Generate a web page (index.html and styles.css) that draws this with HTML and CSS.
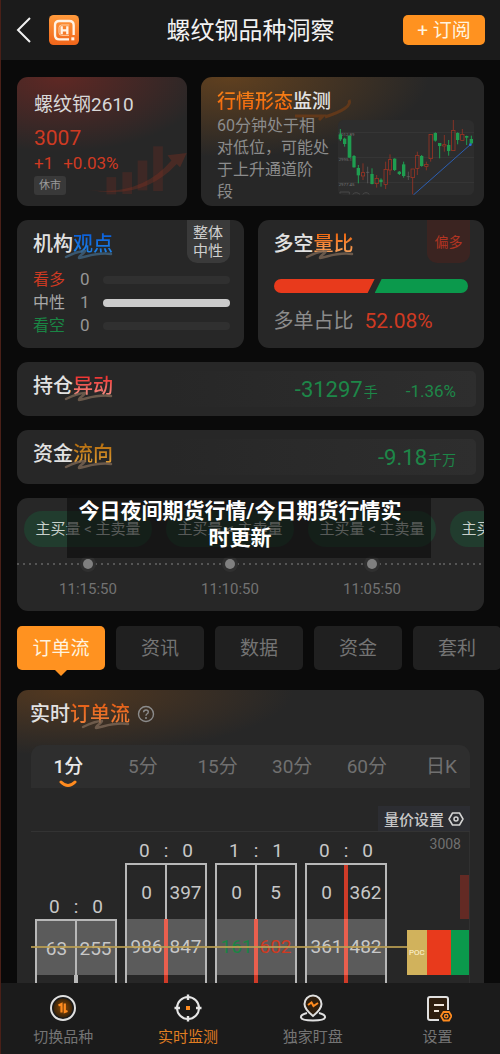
FILE: index.html
```html
<!DOCTYPE html>
<html lang="zh-CN">
<head>
<meta charset="utf-8">
<meta name="viewport" content="width=device-width, initial-scale=1">
<title>螺纹钢品种洞察</title>
<link rel="stylesheet" href="styles.css">
</head>
<body>
<svg class="defs" aria-hidden="true">
  <symbol id="swash" viewBox="0 0 50 12"><path d="M2 8C10 4 17 2 21 2C21 4 14 7 15 9C22 8 33 3 47 5" fill="none" stroke="currentColor" stroke-width="2.500" stroke-linecap="round" stroke-linejoin="round"/></symbol>
</svg>
<header class="topbar">
  <div class="topbar-left">
    <button class="back" aria-label="返回"><svg viewBox="0 0 16 28" width="16" height="28"><path d="M14 2L2 14L14 26" fill="none" stroke="#f0f0f0" stroke-width="2"/></svg></button>
    <svg class="logo" viewBox="0 0 90 90" width="30" height="30" aria-hidden="true">
      <defs><linearGradient id="lg" x2="0" y2="1"><stop stop-color="#ff9a3c"/><stop offset="1" stop-color="#f0651a"/></linearGradient></defs>
      <rect width="90" height="90" rx="14" fill="url(#lg)"/>
      <path d="M60 73H31Q18 73 18 60V31Q18 18 31 18H61Q74 18 74 31V60" fill="none" stroke="#fff3e6" stroke-width="7"/>
      <path d="M60 61H38Q30 61 30 53V38Q30 30 38 30H61" fill="none" stroke="#ffd0a5" stroke-width="3"/>
      <path d="M38 34V58M55 34V58M38 46H55" fill="none" stroke="#fff3e6" stroke-width="7"/>
      <rect x="67" y="67" width="9" height="9" fill="#fff3e6"/>
    </svg>
  </div>
  <h1 class="topbar-title">螺纹钢品种洞察</h1>
  <button class="subscribe">+ 订阅</button>
</header>

<main class="content">
  <div class="row row-quote">
    <section class="card quote">
      <h2 class="quote-name">螺纹钢2610</h2>
      <div class="quote-price">3007</div>
      <div class="quote-change"><span>+1</span><span>+0.03%</span></div>
      <span class="tag">休市</span>
      <svg class="quote-art" viewBox="260 430 300 160" width="100" height="53" aria-hidden="true">
        <g fill="#7a2d22" opacity=".28"><rect x="318" y="530" width="29" height="52"/><rect x="366" y="515" width="29" height="66"/><rect x="412" y="480" width="29" height="90"/><rect x="459" y="437" width="29" height="135"/></g>
        <path d="M262 568Q420 590 514 480L502 464L560 457L540 500L530 490Q430 600 262 568Z" fill="#8a3020" opacity=".35"/>
      </svg>
    </section>
    <section class="card pattern">
      <svg class="pattern-swash" viewBox="0 0 60 24" width="60" height="24" aria-hidden="true"><path d="M2 18L30 18L26 22M32 19Q60 10 56 2" fill="none" stroke="#8a4210" stroke-width="3" opacity=".5"/></svg>
      <h2 class="title title-sm"><span class="hl-deep">行情形态</span>监测</h2>
      <div class="pattern-body">
        <p class="pattern-text">60分钟处于相<br>对低位，可能处<br>于上升通道阶<br>段</p>
        <svg class="mini" viewBox="24 15 408 225" width="136" height="75" role="img" aria-label="走势图">
          <rect x="24" y="15" width="408" height="225" rx="16" fill="#2d2d2d"/>
          <path d="M24 52H432M24 127H432M24 202H432" stroke="#3d3d3d" stroke-width="2"/>
          <g class="mini-label"><text x="26" y="62">3012.89</text><text x="26" y="137">2995.1</text><text x="26" y="212">2977.45</text></g>
          <path d="M30 236V231H58V238M68 238Q78 228 90 238M98 238Q108 228 118 238" fill="none" stroke="#484848" stroke-width="3"/>
          <path d="M31 42V78M44 68V95M58 62V128M72 120V158M85 150V205M126 160V208M153 190V215M194 130V168M208 168V180M221 140V188M275 120V155M316 52V80M329 84V130M356 75V122M383 52V88M410 62V90M424 62V88" stroke="#1f9d50" stroke-width="3"/>
          <g fill="#1f9d50"><rect x="26" y="58" width="10" height="15"/><rect x="39" y="71" width="10" height="16"/><rect x="53" y="62" width="11" height="66"/><rect x="67" y="123" width="10" height="34"/><rect x="80" y="159" width="10" height="22"/><rect x="121" y="177" width="10" height="30"/><rect x="148" y="194" width="10" height="7"/><rect x="189" y="131" width="10" height="34"/><rect x="203" y="170" width="10" height="7"/><rect x="216" y="148" width="10" height="35"/><rect x="270" y="123" width="10" height="30"/><rect x="311" y="54" width="10" height="23"/><rect x="324" y="84" width="10" height="9"/><rect x="351" y="90" width="10" height="18"/><rect x="378" y="54" width="10" height="21"/><rect x="405" y="63" width="10" height="5"/><rect x="419" y="72" width="10" height="13"/></g>
          <path d="M99 145V172M99 184V195M140 180V190M140 206V218M167 140V163M167 208V222M180 118V134M180 165V180M248 188V238M262 110V120M262 160V180M289 140V148M289 155V166M302 132V140M343 60V88M343 94V110M370 15V45M397 42V58" stroke="#b03522" stroke-width="2"/>
          <g fill="none" stroke="#b03522" stroke-width="2"><rect x="94" y="173" width="10" height="10"/><rect x="135" y="190" width="10" height="16"/><rect x="162" y="163" width="10" height="45"/><rect x="175" y="134" width="10" height="31"/><rect x="243" y="162" width="10" height="26"/><rect x="257" y="121" width="10" height="39"/><rect x="284" y="148" width="10" height="6"/><rect x="297" y="58" width="10" height="73"/><rect x="338" y="89" width="10" height="4"/><rect x="365" y="46" width="10" height="61"/><rect x="392" y="58" width="10" height="18"/></g>
          <path d="M113 155V205M108 172H118M235 170V195M230 185H240" stroke="#666" stroke-width="2"/>
          <path d="M250 240L422 88" stroke="#2c5fb3" stroke-width="3"/><circle cx="421" cy="89" r="4" fill="#2c6fe0"/>
        </svg>
      </div>
    </section>
  </div>

  <div class="row row-view">
    <section class="card view">
      <h2 class="title">机构<span class="hl-blue">观点</span><svg class="swash swash-blue"><use href="#swash"/></svg></h2>
      <span class="corner">整体<br>中性</span>
      <ul class="votes">
        <li class="vote"><span class="up">看多</span><b>0</b><i class="track"></i></li>
        <li class="vote"><span>中性</span><b>1</b><i class="track track-full"></i></li>
        <li class="vote"><span class="down">看空</span><b>0</b><i class="track"></i></li>
      </ul>
    </section>
    <section class="card ratio">
      <h2 class="title">多空<span class="hl-orange">量比</span><svg class="swash"><use href="#swash"/></svg></h2>
      <span class="corner corner-red">偏多</span>
      <div class="ratio-bar"><i class="ratio-long"></i><i class="ratio-short"></i></div>
      <div class="ratio-text"><span>多单占比</span><b>52.08%</b></div>
    </section>
  </div>

  <section class="card strip">
    <h2 class="title">持仓<span class="hl-red">异动</span><svg class="swash"><use href="#swash"/></svg></h2>
    <div class="strip-values"><span class="big">-31297<small>手</small></span><span class="pct">-1.36%</span></div>
  </section>
  <section class="card strip">
    <h2 class="title">资金<span class="hl-gold">流向</span><svg class="swash"><use href="#swash"/></svg></h2>
    <div class="strip-values"><span class="big">-9.18<small>千万</small></span></div>
  </section>

  <div class="timeline-wrap">
    <section class="card timeline">
      <ol class="events">
        <li class="event"><span class="pill">主买量 &lt; 主卖量</span><i class="dot"></i><time>11:15:50</time></li>
        <li class="event"><span class="pill">主买量 &lt; 主卖量</span><i class="dot"></i><time>11:10:50</time></li>
        <li class="event"><span class="pill">主买量 &lt; 主卖量</span><i class="dot"></i><time>11:05:50</time></li>
        <li class="event"><span class="pill">主买量 &lt; 主卖量</span></li>
      </ol>
    </section>
    <div class="caption">今日夜间期货行情/今日期货行情实时更新</div>
  </div>

  <nav class="tabs" aria-label="数据分类">
    <button class="tab tab-active">订单流</button><button class="tab">资讯</button><button class="tab">数据</button><button class="tab">资金</button><button class="tab">套利</button>
  </nav>

  <section class="card flow">
    <div class="flow-head">
      <h2 class="title">实时<span class="hl-flow">订单流</span><svg class="swash"><use href="#swash"/></svg></h2>
      <svg viewBox="0 0 18 18" width="18" height="18" aria-hidden="true"><circle cx="9" cy="9" r="7.500" fill="none" stroke="#8c8c8c" stroke-width="1.400"/><path d="M6.600 7.200Q6.700 5 9 5Q11.300 5 11.300 7Q11.300 8.200 9.900 9Q9 9.600 9 10.700" fill="none" stroke="#8c8c8c" stroke-width="1.400"/><circle cx="9" cy="13" r="1" fill="#8c8c8c"/></svg>
    </div>
    <div class="periods">
      <button class="period period-active">1分<svg viewBox="0 0 18 8" width="18" height="8" aria-hidden="true"><path d="M2 2Q9 9 16 2" fill="none" stroke="#ff8b1f" stroke-width="3" stroke-linecap="round"/></svg></button><button class="period">5分</button><button class="period">15分</button><button class="period">30分</button><button class="period">60分</button><button class="period">日K</button>
    </div>
    <button class="settings">量价设置<svg viewBox="0 0 16 16" width="16" height="16" aria-hidden="true"><path d="M4.500 2H11.500L15 8L11.500 14H4.500L1 8Z" fill="none" stroke="#d5d5d5" stroke-width="1.500" stroke-linejoin="round"/><circle cx="8" cy="8" r="2" fill="none" stroke="#d5d5d5" stroke-width="1.500"/></svg></button>
    <div class="chart">
      <div class="prints">
        <div class="print">
          <div class="print-head"><span>0</span><span>:</span><span>0</span></div>
          <div class="cells cells-poc cells-first"><span>63</span><span>255</span></div>
          <div class="cells cells-cut cells-white"></div>
        </div>
        <div class="print">
          <div class="print-head"><span>0</span><span>:</span><span>0</span></div>
          <div class="cells cells-first"><span>0</span><span>397</span></div>
          <div class="cells cells-poc cells-red"><span>986</span><span>847</span></div>
          <div class="cells cells-cut cells-red"></div>
        </div>
        <div class="print">
          <div class="print-head"><span>1</span><span>:</span><span>1</span></div>
          <div class="cells cells-first"><span>0</span><span>5</span></div>
          <div class="cells cells-poc cells-red"><span class="down">161</span><span class="up">602</span></div>
          <div class="cells cells-cut cells-red"></div>
        </div>
        <div class="print">
          <div class="print-head"><span>0</span><span>:</span><span>0</span></div>
          <div class="cells cells-first cells-red"><span>0</span><span>362</span></div>
          <div class="cells cells-poc cells-red"><span>361</span><span>482</span></div>
          <div class="cells cells-cut cells-red"></div>
        </div>
      </div>
      <div class="axis">
        <span class="axis-price">3008</span>
        <i class="axis-bar"></i>
        <div class="poc"><span>POC</span><i class="poc-red"></i><i class="poc-green"></i></div>
      </div>
      <i class="poc-line"></i>
    </div>
  </section>
</main>

<nav class="bottom" aria-label="主导航">
  <a class="nav-item" href="#switch">
    <svg viewBox="0 0 28 28" width="28" height="28" aria-hidden="true"><defs><radialGradient id="glow"><stop stop-color="#8a4a08"/><stop offset="1" stop-color="#3a2308"/></radialGradient></defs><circle cx="14" cy="14" r="9.500" fill="url(#glow)"/><circle cx="14" cy="14" r="12" fill="none" stroke="#e0e0e0" stroke-width="2"/><path d="M9.500 11.500L12.500 10V18.500M18.500 17L15.800 18V9.500" fill="none" stroke="#ff8b1f" stroke-width="2.200"/></svg>
    <span>切换品种</span></a>
  <a class="nav-item nav-active" href="#monitor" aria-current="page">
    <svg viewBox="0 0 28 28" width="28" height="28" aria-hidden="true"><circle cx="14" cy="14" r="11" fill="none" stroke="#e6e6e6" stroke-width="2"/><path d="M14 .5V6M14 22V27.500M.5 14H6M22 14H27.500" stroke="#e6e6e6" stroke-width="2.400"/><rect x="12" y="12" width="4" height="4" fill="#ff8b1f"/></svg>
    <span>实时监测</span></a>
  <a class="nav-item" href="#watch">
    <svg viewBox="0 0 28 28" width="28" height="28" aria-hidden="true"><path d="M8 19C4 20 1.500 21.500 2 23.500C3 27.500 25 27.500 26 23.500C26.500 21.500 24 20 20 19" fill="none" stroke="#e0e0e0" stroke-width="2"/><path d="M14 22C9 18 5.500 14 5.500 10A8.500 8.500 0 0 1 22.500 10C22.500 14 19 18 14 22Z" fill="#2e1e0e" stroke="#e0e0e0" stroke-width="2"/><path d="M9 11L12.500 8.500L14.500 12L19 9" fill="none" stroke="#ff8b1f" stroke-width="2"/></svg>
    <span>独家盯盘</span></a>
  <a class="nav-item" href="#settings">
    <svg viewBox="0 0 28 28" width="28" height="28" aria-hidden="true"><path d="M15 26H6Q4 26 4 24V5Q4 3 6 3H22Q24 3 24 5V16" fill="#2e1e0e" stroke="#e0e0e0" stroke-width="2"/><path d="M10 11H20M10 17H15" stroke="#f0e6da" stroke-width="2"/><path d="M19.500 18H25L27.500 22L25 26.500H19.500L17 22Z" fill="#1b1b1b" stroke="#ff8b1f" stroke-width="1.800"/><circle cx="22.200" cy="22.200" r="1.700" fill="none" stroke="#ff8b1f" stroke-width="1.400"/></svg>
    <span>设置</span></a>
</nav>
</body>
</html>
```
FILE: styles.css
```css
* { box-sizing: border-box; }
body {
  margin: 0;
  min-height: 100vh;
  display: flex;
  flex-direction: column;
  overflow-x: hidden;
  background: #0a0a0a;
  border-left: 1px solid #4a2018;
  color: #d8d8d8;
  font-family: Roboto, "Noto Sans CJK SC", sans-serif;
}
h1, h2, p, ul, ol { margin: 0; padding: 0; font-weight: 400; }
li { list-style: none; }
i, b { font-style: normal; font-weight: 400; }
button { border: 0; padding: 0; margin: 0; background: none; color: inherit; font-family: inherit; }
.defs { position: absolute; width: 0; height: 0; }
.up { color: #cf3a22; }
.down { color: #1a8544; }

.topbar {
  display: grid;
  grid-template-columns: 1fr auto 1fr;
  align-items: center;
  height: 60px;
  padding: 0 15px;
  background: #1b1b1b;
}
.topbar-left { display: flex; align-items: center; gap: 17px; }
.back { display: flex; }
.topbar-title { font-size: 24px; line-height: 34px; padding-top: 1px; color: #f2f2f2; }
.subscribe {
  justify-self: end;
  width: 82px;
  height: 30px;
  padding-top: 1px;
  border-radius: 5px;
  background: #ff9220;
  color: #fff3df;
  font-size: 19px;
  line-height: 29px;
}

.content { display: flex; flex-direction: column; padding: 17px 16px 0; flex: 1; }
.row { display: grid; gap: 14px; margin-bottom: 14px; }
.row-quote { grid-template-columns: 170fr 283fr; }
.row-view { grid-template-columns: 1fr 1fr; }
.card { position: relative; border-radius: 11px; background: #272727; }

.quote {
  padding: 16px 17px 0;
  height: 129px;
  background: radial-gradient(ellipse 150px 75px at 25% 0, #5f2824, rgba(39, 39, 39, 0)) #272727;
}
.quote-name { font-size: 19px; line-height: 24px; }
.quote-price { margin-top: 6px; font-size: 21px; line-height: 30px; color: #cf3a22; }
.quote-change { display: flex; gap: 10px; font-size: 17px; line-height: 20px; color: #cf3a22; }
.tag {
  display: inline-block;
  margin-top: 3px;
  padding: 0 5px;
  border-radius: 3px;
  background: #393939;
  color: #9a9a9a;
  font-size: 11px;
  line-height: 19px;
}
.quote-art { position: absolute; right: 0; bottom: 9px; }

.pattern {
  padding: 12px 10px 0 16px;
  background: radial-gradient(ellipse 200px 80px at 10% 0, #60401f, rgba(39, 39, 39, 0)) #272727;
}
.pattern-swash { position: absolute; left: 92px; top: 21px; }
.pattern-body { display: flex; justify-content: space-between; align-items: start; }
.pattern-text { font-size: 16px; line-height: 22px; color: #8c8c8c; white-space: nowrap; }
.mini { margin-top: 5px; }
.mini-label { fill: #777; font-size: 13px; }

.title { position: relative; font-size: 20px; line-height: 26px; font-weight: 500; color: #e2e2e2; width: max-content; }
.title-sm { font-size: 19px; }
.title span { background-clip: text; -webkit-background-clip: text; color: transparent; }
.title .hl-deep { background-image: linear-gradient(#f58218, #f4620c); }
.title .hl-blue { background-image: linear-gradient(#0a5cd8, #2088ea); }
.title .hl-orange { background-image: linear-gradient(#ee6208, #f8ab68); }
.title .hl-red { background-image: linear-gradient(#ee2626, #f49a8e); }
.title .hl-gold { background-image: linear-gradient(#b0690c, #e8a438); }
.title .hl-flow { background-image: linear-gradient(#e65e14, #f0823c); }
.swash { position: absolute; right: -1px; bottom: -4px; width: 50px; height: 12px; color: #7b6655; opacity: .8; }
.swash-blue { color: #3f6380; }

.view, .ratio { padding: 11px 16px 0; height: 128px; }
.corner {
  position: absolute;
  top: 0;
  right: 14px;
  width: 43px;
  height: 43px;
  display: flex;
  align-items: center;
  justify-content: center;
  border-radius: 0 0 10px 10px;
  background: #3a3a3a;
  color: #cfcfcf;
  font-size: 15px;
  line-height: 18px;
}
.corner-red { background: #3b2421; color: #b23422; font-size: 14px; }
.votes { margin-top: 11px; }
.vote { display: grid; grid-template-columns: 47px 23px 1fr; align-items: center; margin-right: -2px; font-size: 16px; line-height: 23px; color: #a8a8a8; }
.vote b { font-size: 17px; color: #969696; }
.track { height: 8px; border-radius: 4px; background: #303030; }
.track-full { background: #cbcbcb; }
.ratio-bar { display: flex; height: 14px; margin-top: 22px; border-radius: 7px; overflow: hidden; }
.ratio-long { flex: 52; background: #e83a1c; clip-path: polygon(0 0, 100% 0, calc(100% - 7px) 100%, 0 100%); }
.ratio-short { flex: 48; background: #0b994c; clip-path: polygon(7px 0, 100% 0, 100% 100%, 0 100%); }
.ratio-text { display: flex; gap: 11px; margin-top: 13px; font-size: 20px; line-height: 30px; color: #8c8c8c; }
.ratio-text b { font-size: 21px; color: #cf3a22; }

.strip { display: flex; justify-content: space-between; height: 54px; padding: 9px 8px 9px 16px; margin-bottom: 14px; }
.strip-values {
  flex: 1;
  display: flex;
  justify-content: flex-end;
  align-items: center;
  gap: 28px;
  padding: 3px 20px 0 0;
  border-radius: 5px;
  background: linear-gradient(90deg, #272727 15%, #2e2e2e);
  color: #1d8748;
}
.strip .title { align-self: flex-start; margin-top: 2px; }
.big { font-size: 22px; line-height: 32px; }
.big small { font-size: 14px; margin-left: 1px; }
.pct { font-size: 17px; }

.timeline-wrap { position: relative; }
.timeline { height: 113px; overflow: hidden; padding: 13px 0 0; }
.events { display: flex; }
.event { flex: 0 0 142px; display: flex; flex-direction: column; align-items: center; position: relative; }
.event::before {
  content: "";
  position: absolute;
  top: 52px;
  left: 0;
  right: 0;
  height: 2px;
  background: repeating-linear-gradient(90deg, #555 0 2px, transparent 2px 6px);
}
.pill { width: 128px; height: 36px; border-radius: 18px; background: #213c2e; font-size: 15px; line-height: 36px; text-align: center; white-space: nowrap; color: #c8d0cb; }
.dot { position: relative; width: 10px; height: 10px; margin-top: 12px; border-radius: 50%; background: #808080; box-shadow: 0 0 0 3px #303030; }
.event time { margin-top: 9px; font-size: 15px; line-height: 22px; color: #727272; }
.caption {
  position: absolute;
  top: -3px;
  left: 50px;
  right: 53px;
  padding: 3px 26px 6px 8px;
  background: rgba(12, 12, 12, .6);
  color: #fff;
  font-size: 21px;
  font-weight: 700;
  line-height: 27px;
  text-align: center;
}

.tabs { display: flex; gap: 11px; margin: 15px -16px 20px 0; }
.tab { position: relative; flex: 0 0 88px; height: 44px; border-radius: 5px; background: #202020; color: #747474; font-size: 19px; line-height: 46px; }
.tab-active { background: #ff9220; color: #fff3df; }
.tab-active::after { content: ""; position: absolute; left: 38px; top: 44px; border: 6px solid transparent; border-top-color: #ff9220; border-bottom: 0; }

.flow {
  display: flex;
  flex-direction: column;
  flex: 1;
  padding: 11px 14px 0;
  border-radius: 11px 11px 0 0;
  background: radial-gradient(ellipse 230px 65px at 10% 0, #523820, rgba(39, 39, 39, 0)) #272727;
}
.flow-head { display: flex; align-items: center; gap: 7px; margin-left: -1px; }
.periods { display: flex; height: 43px; margin-top: 18px; border-radius: 11px 11px 0 0; background: #2e2e2e; overflow: hidden; }
.period { position: relative; flex: 0 0 17%; font-size: 19px; line-height: 44px; color: #707070; }
.period-active { color: #e8e8e8; font-weight: 500; }
.period svg { position: absolute; left: 50%; bottom: 0; margin-left: -9px; }
.settings {
  align-self: flex-end;
  display: flex;
  align-items: center;
  gap: 4px;
  height: 25px;
  margin-top: 18px;
  padding: 0 6px;
  background: #2c2d32;
  color: #c8c8c8;
  font-size: 15px;
  font-weight: 500;
}
.chart { position: relative; display: flex; justify-content: space-between; align-items: stretch; flex: 1; border-top: 1px solid #333; }
.prints { display: flex; align-items: flex-end; gap: 8px; padding-left: 4px; }
.print { width: 82px; }
.print-head, .cells { display: grid; font-size: 19px; text-align: center; color: #c8c8c8; }
.print-head { grid-template-columns: 1fr auto 1fr; line-height: 25px; }
.cells {
  position: relative;
  grid-template-columns: 1fr 1fr;
  height: 56px;
  line-height: 56px;
  border: solid #b8b8b8;
  border-width: 0 2px;
}
.cells::after { content: ""; position: absolute; top: 0; bottom: 0; left: 50%; width: 2px; margin-left: -1px; background: #b8b8b8; }
.cells-first { border-top-width: 2px; }
.cells-poc { background: #5b5b5b; }
.cells-red::after { width: 4px; margin-left: -2px; background: #cf3b28; }
.cells-poc.cells-red::after { background: #ea5f4e; }
.cells-white::after { width: 4px; margin-left: -2px; }
.cells-cut { height: 8px; }
.axis { display: flex; flex-direction: column; align-items: flex-end; width: 63px; border-right: 1px solid #303030; }
.axis-price { padding: 2px 8px 0 0; font-size: 14px; line-height: 20px; color: #707070; }
.axis-bar { width: 9px; height: 44px; margin-top: 21px; background: #632a24; }
.poc { display: grid; grid-template-columns: 20fr 25fr 18fr; width: 100%; height: 45px; margin-top: 11px; background: #d1b25c; font-size: 8px; line-height: 45px; color: #fff6d8; text-align: center; }
.poc-red { background: #e83a1c; }
.poc-green { background: #0b994c; }
.poc-line { position: absolute; left: 0; right: 63px; bottom: 35px; height: 2px; background: rgba(188, 160, 82, .85); }

.bottom { display: grid; grid-template-columns: repeat(4, 1fr); height: 71px; padding-top: 11px; background: #1b1b1b; }
.nav-item { display: flex; flex-direction: column; align-items: center; gap: 4px; color: #747474; font-size: 15px; line-height: 22px; text-decoration: none; }
.nav-active { color: #e07e22; }
```
